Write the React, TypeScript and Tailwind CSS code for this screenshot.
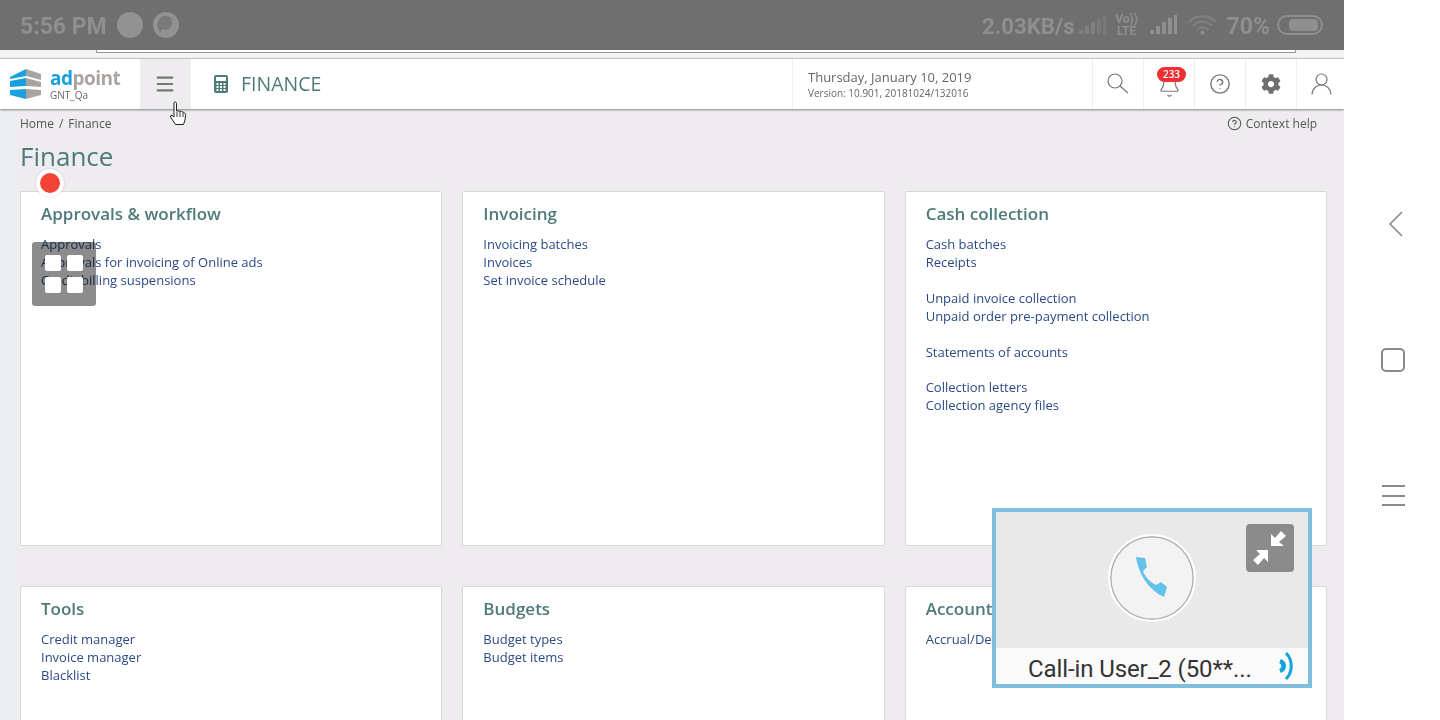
import { FaCog } from "react-icons/fa"
import { CircleHelp, Menu, Bell } from "lucide-react"

const sections = [
  {
    title: "Approvals & workflow",
    links: ["Approvals", "Approvals for invoicing of Online ads", "Credit billing suspensions"],
  },
  {
    title: "Invoicing",
    links: ["Invoicing batches", "Invoices", "Set invoice schedule"],
  },
  {
    title: "Cash collection",
    links: [
      "Cash batches",
      "Receipts",
      "",
      "Unpaid invoice collection",
      "Unpaid order pre-payment collection",
      "",
      "Statements of accounts",
      "",
      "Collection letters",
      "Collection agency files",
    ],
  },
  {
    title: "Tools",
    links: ["Credit manager", "Invoice manager", "Blacklist"],
  },
  {
    title: "Budgets",
    links: ["Budget types", "Budget items"],
  },
  {
    title: "Accounting",
    links: ["Accrual/Deferral"],
  },
]

function StatusBar() {
  return (
    <div className="flex h-[50px] shrink-0 items-center justify-between bg-[#6f6f6f] pl-5 pr-[21px] font-['Roboto',sans-serif] text-[#8f8f8f]">
      <div className="flex items-center">
        <span className="w-[97px] pt-[2px] text-[23px] font-bold leading-none">5:56 PM</span>
        <span className="h-[26px] w-[26px] rounded-full bg-[#929292]" />
        <svg width="26" height="26" viewBox="0 0 26 26" className="ml-[10px]">
          <circle cx="13" cy="13" r="13" fill="#929292" />
          <circle cx="13" cy="13" r="8.5" fill="#6f6f6f" />
          <circle cx="14" cy="14" r="8" fill="#929292" />
          <circle cx="12" cy="11" r="7" fill="#7a7a7a" />
          <path d="M6 18 L9 16" stroke="#6f6f6f" strokeWidth="1.5" />
        </svg>
      </div>
      <div className="flex items-center">
        <span className="pt-[2px] text-[22.2px] font-bold leading-none">2.03KB/s</span>
        <svg width="27" height="20" viewBox="0 0 27 20" className="ml-[4px]" fill="#7f7f7f">
          <rect x="0" y="15" width="4" height="4" />
          <rect x="6" y="11" width="4" height="8" />
          <rect x="12" y="7" width="4" height="12" />
          <rect x="18" y="3" width="4" height="16" fill="#797979" />
          <rect x="24" y="0" width="3" height="19" fill="#797979" />
        </svg>
        <div className="ml-[9px] flex w-[24px] flex-col text-center text-[12px] font-bold leading-[12px]">
          <span>Vo))</span>
          <span>LTE</span>
        </div>
        <svg width="27" height="20" viewBox="0 0 27 20" className="ml-[11px]" fill="#8f8f8f">
          <rect x="0" y="15" width="4" height="4" />
          <rect x="6" y="11" width="4" height="8" />
          <rect x="12" y="7" width="4" height="12" />
          <rect x="18" y="3" width="4" height="16" />
          <rect x="24" y="0" width="3" height="19" />
        </svg>
        <svg width="29" height="22" viewBox="0 0 30 22" className="ml-[11px]" fill="none" stroke="#7f7f7f" strokeWidth="2.5">
          <path d="M1 8 C 8 0, 22 0, 29 8" />
          <path d="M5 12 C 10 6, 20 6, 25 12" />
          <path d="M9 16 C 12 13, 18 13, 21 16" />
          <circle cx="15" cy="19" r="2" fill="#8f8f8f" stroke="none" />
        </svg>
        <span className="ml-[10px] pt-[2px] text-[23px] font-bold leading-none">70%</span>
        <div className="ml-[7px] flex h-[20px] w-[46px] items-center justify-end rounded-full border-2 border-[#8f8f8f] px-[3px]">
          <span className="h-[12px] w-[29px] rounded-[4px] bg-[#8f8f8f]" />
        </div>
      </div>
    </div>
  )
}

function Header() {
  return (
    <div className="relative flex h-[51px] shrink-0 items-stretch border-t border-[#c4c4c4] bg-white shadow-[0_1px_2px_rgba(0,0,0,0.45)]">
      <div className="flex w-[140px] items-center pl-[10px]">
        <svg width="31" height="32" viewBox="0 0 31 32">
          <path d="M0 9 L16 1 L16 8 L0 11 Z" fill="#18a0e0" />
          <path d="M16 1 L31 6 L31 12 L16 8 Z" fill="#a8a4a0" />
          <path d="M0 13 L16 10 L16 18 L0 19 Z" fill="#18a0e0" />
          <path d="M16 10 L31 14 L31 19 L16 18 Z" fill="#a8a4a0" />
          <path d="M0 22 L16 21 L16 31 L0 27 Z" fill="#18a0e0" />
          <path d="M16 21 L31 22 L31 27 L16 31 Z" fill="#a8a4a0" />
        </svg>
        <div className="ml-[9px] flex flex-col">
          <div className="text-[19px] font-bold leading-[20px] tracking-[-0.5px]">
            <span className="text-[#18a0e0]">ad</span>
            <span className="text-[#aaa5a2]">point</span>
          </div>
          <span className="mt-[1px] text-[10px] leading-[12px] text-[#666]">GNT_Qa</span>
        </div>
      </div>
      <div className="flex w-[51px] items-center justify-center bg-[#eeecef]">
        <Menu size={22} strokeWidth={2.3} className="mr-[1px] text-[#777]" />
      </div>
      <div className="flex flex-1 items-center pl-[23px]">
        <svg width="14" height="18" viewBox="0 0 14 18">
          <rect width="14" height="18" rx="2" fill="#4f7a7a" />
          <rect x="2" y="2" width="10" height="4" fill="white" />
          <path d="M2.5 8h2v2h-2zM6 8h2v2H6zM9.500 8h2v2h-2zM2.500 11h2v2h-2zM6 11h2v2H6zM9.500 11h2v2h-2zM2.500 14h2v2h-2zM6 14h2v2H6zM9.500 14h2v2h-2z" fill="white" />
        </svg>
        <span className="ml-[13px] text-[19.5px] leading-none text-[#4f7a7a]">FINANCE</span>
      </div>
      <div className="flex w-[300px] flex-col justify-center border-l border-[#eeeeee] pl-[15px] text-[#666]">
        <span className="text-[13px] leading-[18px]">Thursday, January 10, 2019</span>
        <span className="text-[10px] leading-[14px]">Version: 10.901, 20181024/132016</span>
      </div>
      <div className="flex w-[51px] items-center justify-center border-l border-[#eeeeee]">
        <svg width="22" height="22" viewBox="0 0 22 22" fill="none" stroke="#777" strokeWidth="1.2">
          <circle cx="8" cy="8" r="7" />
          <path d="M13 13 L21 20" />
        </svg>
      </div>
      <div className="relative flex w-[51px] items-center justify-center border-l border-[#eeeeee]">
        <Bell size={23} strokeWidth={1.2} className="mt-[5px] text-[#777]" />
        <span className="absolute left-[13px] top-[8px] flex h-[15px] w-[29px] items-center justify-center rounded-full bg-[#ee3034] text-[10px] font-semibold text-white">
          233
        </span>
      </div>
      <div className="flex w-[51px] items-center justify-center border-l border-[#eeeeee]">
        <CircleHelp size={22} strokeWidth={1.5} className="text-[#777]" />
      </div>
      <div className="flex w-[51px] items-center justify-center border-l border-[#eeeeee]">
        <FaCog size={20} className="text-[#6e6e6e]" />
      </div>
      <div className="flex w-[48px] items-center justify-center border-l border-[#eeeeee] pl-[2px]">
        <svg width="21" height="22" viewBox="0 0 21 22" fill="none" stroke="#777" strokeWidth="1.2">
          <circle cx="10.500" cy="6.500" r="5.500" />
          <path d="M1 21.500 C1.500 15 6 12 10.500 12 C15 12 19.500 15 20 21.500" />
        </svg>
      </div>
    </div>
  )
}

function CallWidget() {
  return (
    <div className="absolute left-[992px] top-[508px] flex h-[180px] w-[320px] flex-col border-4 border-[#7fbfdc] bg-[#e9e9e9]">
      <div className="relative flex flex-1 items-center justify-center pb-[4px]">
        <div className="flex h-[88px] w-[88px] items-center justify-center rounded-full border-2 border-white bg-[#f3f3f3] shadow-[inset_0_0_0_1.5px_#b0b0b0]">
          <svg width="34" height="42" viewBox="0 0 34 42">
            <path
              d="M1 0 L10 1 C11 5 11 7 12 10 L8 14 C10 20 15 25 21 28 L26 25 L32 30 L29 40 C16 34 4 20 1 0 Z"
              fill="#62c2ea"
            />
          </svg>
        </div>
        <div className="absolute left-[250px] top-[12px] flex h-[48px] w-[48px] items-center justify-center rounded-[4px] bg-[#8b8b8b]">
          <svg width="34" height="34" viewBox="0 0 34 34" fill="white">
            <path d="M18 15 L18 3 L22 7 L28 0 L33 5 L26 11 L31 15 Z" />
            <path d="M15 19 L15 31 L11 27 L5 34 L0 29 L7 23 L3 19 Z" />
          </svg>
        </div>
      </div>
      <div className="relative flex h-[36px] shrink-0 items-center bg-[#fafafa] pl-[32px] pt-[6px] font-['Roboto',sans-serif] text-[24px] leading-none text-[#333]">
        <span className="tracking-[-0.1px]">Call-in User_2 (50**...</span>
        <svg width="16" height="30" viewBox="0 0 16 30" className="absolute left-[283px] top-[3px]" fill="none" stroke="#13a3dc">
          <path d="M1 10 C6 12 6 18 1 20" strokeWidth="4.5" />
          <path d="M7 2 C14 9 14 21 7 28" strokeWidth="3" />
        </svg>
      </div>
    </div>
  )
}

function FloatingTools() {
  return (
    <>
      <div className="absolute left-[36px] top-[169px] flex h-[28px] w-[28px] items-center justify-center rounded-full bg-white shadow-[0_0_2px_rgba(0,0,0,0.2)]">
        <span className="h-[20px] w-[20px] rounded-full bg-[#f44336]" />
      </div>
      <div className="absolute left-[32px] top-[242px] h-[64px] w-[64px] rounded-[3px] bg-[#8c8c8c] mix-blend-multiply" />
      <div className="absolute left-[32px] top-[242px] grid h-[64px] w-[64px] grid-cols-[16px_16px] content-center justify-center gap-[6px]">
        <span className="h-[16px] w-[16px] rounded-[2px] bg-white" />
        <span className="h-[16px] w-[16px] rounded-[2px] bg-white" />
        <span className="h-[16px] w-[16px] rounded-[2px] bg-white" />
        <span className="h-[16px] w-[16px] rounded-[2px] bg-white" />
      </div>
      <svg width="18" height="25" viewBox="0 0 18 25" className="absolute left-[169px] top-[101px]">
        <path
          d="M5 1.500 C6 .500 7.500 1 7.500 2.500 L7.500 10 L10 10 L12.500 10.500 L15 11.500 C16 12 16.500 13 16.500 14 L16 19 L14.500 23.500 L6.500 23.500 L1.500 16 C1 14.500 2.500 13.500 4 15 L5 16 Z"
          fill="white"
          stroke="#222"
          strokeWidth="1"
        />
        <path d="M8 11 V16 M11 11 V16 M14 12 V16" stroke="#222" strokeWidth="0.9" />
      </svg>
    </>
  )
}

export default function App() {
  return (
    <div className="relative flex h-[720px] w-[1440px] overflow-hidden bg-white font-['Open_Sans',sans-serif]">
      <div className="flex w-[1344px] flex-col overflow-hidden bg-[#eeecef]">
        <StatusBar />
        <div className="h-[8px] shrink-0 bg-[#f5f4f4] pl-[96px] pr-[48px]">
          <div className="h-[3px] rounded-b-[1px] border-x border-b border-[#9a9a9a] bg-white" />
        </div>
        <Header />
        <div className="border-l-[15px] border-[#ebefef] pl-[5px] pr-[17px]">
          <div className="flex h-[29px] items-center justify-between text-[12px] text-[#555]">
            <span className="flex gap-[5px]">
              <span>Home</span>
              <span>/</span>
              <span>Finance</span>
            </span>
            <span className="mr-[10px] flex items-center gap-[4px]">
              <CircleHelp size={15} strokeWidth={1.7} />
              Context help
            </span>
          </div>
          <h1 className="h-[36px] text-[26px] leading-[36px] text-[#4f7a7a]">Finance</h1>
          <div className="mt-[17px] grid grid-cols-3 gap-x-[20px] gap-y-[40px]">
            {sections.map((section) => (
              <div key={section.title} className="h-[355px] rounded-[2px] border border-[#d8d8d8] bg-white px-[20px] pt-[10px]">
                <h2 className="text-[17px] font-semibold leading-[24px] text-[#4f7a7a]">{section.title}</h2>
                <div className="mt-[9px]">
                  {section.links.map((link, i) => (
                    <div key={i} className={i === 7 ? "h-[17px]" : "h-[18px] text-[13px] leading-[18px] text-[#2b4a86]"}>
                      {link}
                    </div>
                  ))}
                </div>
              </div>
            ))}
          </div>
        </div>
      </div>
      <div className="flex w-[96px] flex-col items-center">
        <svg width="15" height="26" viewBox="0 0 15 26" fill="none" stroke="#8a8a8a" strokeWidth="1.6" className="ml-[6px] mt-[211px]">
          <path d="M14 1 L2 13 L14 25" />
        </svg>
        <div className="mr-[-2px] mt-[111px] h-[24px] w-[24px] rounded-[5px] border-2 border-[#8a8a8a]" />
        <div className="mr-[-2px] mt-[113px] flex flex-col gap-[7.5px]">
          <span className="h-[2px] w-[23px] bg-[#8a8a8a]" />
          <span className="h-[2px] w-[23px] bg-[#8a8a8a]" />
          <span className="h-[2px] w-[23px] bg-[#8a8a8a]" />
        </div>
      </div>
      <FloatingTools />
      <CallWidget />
    </div>
  )
}
